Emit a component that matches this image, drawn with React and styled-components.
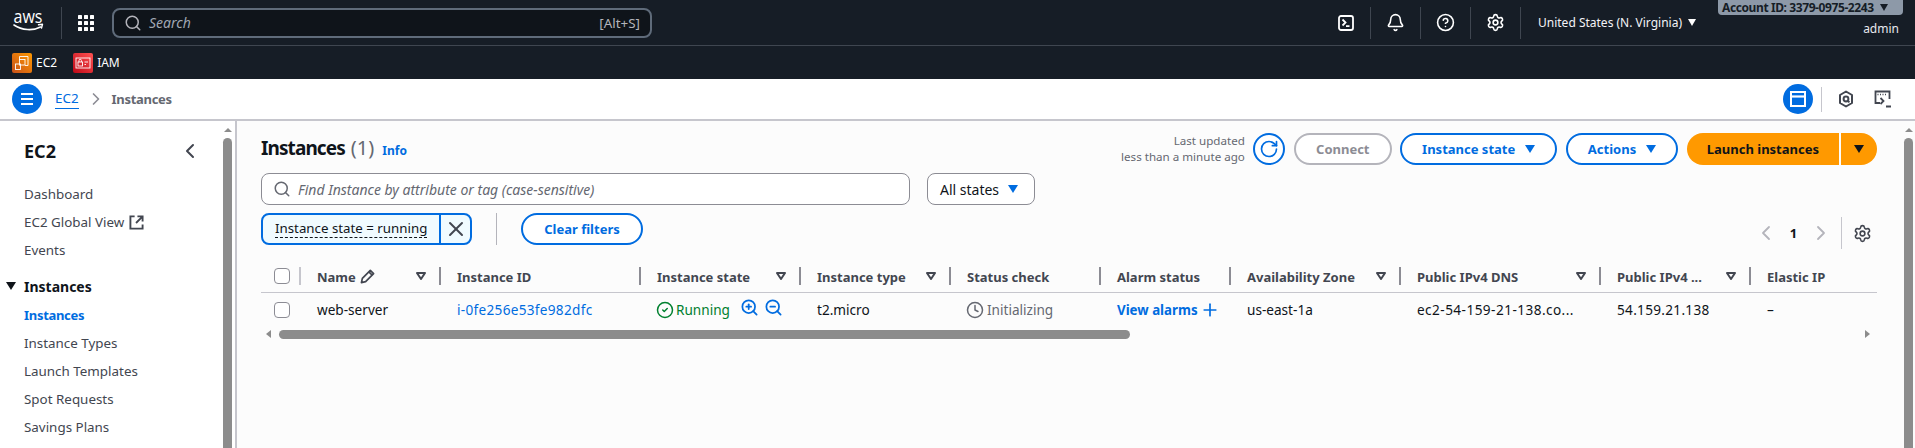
import React from 'react'
import styled, { createGlobalStyle } from 'styled-components'
import { Bell, ChevronLeft, ChevronRight, CircleCheck, CircleHelp, Clock, Plus, RotateCw, Search, Settings, X, ZoomIn, ZoomOut } from 'lucide-react'

const GlobalStyle = createGlobalStyle`
  html, body { margin: 0; padding: 0; height: 448px; overflow: hidden; background: #fff; }
  body { font-family: "Noto Sans", "Open Sans", sans-serif; font-size: 14px; color: #0f141a; }
  * { box-sizing: border-box; }
`

const Page = styled.div`
  width: 1915px;
  height: 448px;
  display: flex;
  flex-direction: column;
  overflow: hidden;
`

/* top dark nav */
const TopNav = styled.header`
  height: 46px;
  flex: none;
  display: flex;
  align-items: center;
  padding-right: 12px;
  background: #161d26;
  border-bottom: 1px solid #3f4650;
  color: #fff;
`
const LogoBox = styled.div`
  width: 61px;
  padding-left: 13px;
  display: flex;
`
const NavSep = styled.div`
  width: 1px;
  height: 32px;
  background: #3f4650;
  flex: none;
`
const GridBtn = styled.div`
  width: 50px;
  padding-left: 16px;
  display: flex;
`
const SearchBox = styled.div`
  width: 540px;
  height: 30px;
  display: flex;
  align-items: center;
  padding: 0 10px;
  background: #0f141a;
  border: 2px solid #5f6b7a;
  border-radius: 8px;
  color: #b4b4bb;
`
const SearchHint = styled.span`
  font-style: italic;
  font-size: 14px;
  margin-left: 7px;
  flex: 1;
  color: #a0a7b2;
`
const SearchKey = styled.span`
  font-size: 13.4px;
`
const NavSlot = styled.div`
  width: 49px;
  display: flex;
  justify-content: center;
`
const NavIcons = styled.div`
  margin-left: 669px;
  display: flex;
  align-items: center;
`
const Region = styled.div`
  display: flex;
  align-items: center;
  margin-left: 17px;
  font-size: 12px;
  color: #f3f3f7;
  gap: 6px;
`
const Account = styled.div`
  margin-left: auto;
  width: 185px;
  align-self: flex-start;
  display: flex;
  flex-direction: column;
  align-items: flex-end;
`
const AccountBadge = styled.div`
  width: 185px;
  height: 15px;
  background: #8d99a8;
  border-radius: 0 0 4px 4px;
  color: #161d26;
  font-size: 12px;
  font-weight: 700;
  letter-spacing: -0.4px;
  line-height: 15px;
  padding-left: 4px;
  white-space: nowrap;
  display: flex;
  align-items: center;
  gap: 6px;
`
const AdminName = styled.div`
  font-size: 12px;
  line-height: 16px;
  margin-top: 6px;
  padding-right: 4px;
  color: #e8e8ee;
`

/* favourites bar */
const ServiceBar = styled.div`
  height: 33px;
  flex: none;
  display: flex;
  align-items: center;
  padding-left: 12px;
  background: #161d26;
  font-size: 12px;
  color: #fff;
`
const Service = styled.div`
  display: flex;
  align-items: center;
  gap: 4px;
  margin-right: 16px;
`

/* breadcrumb */
const Crumbs = styled.div`
  height: 42px;
  flex: none;
  display: flex;
  align-items: center;
  padding-left: 12px;
  background: #fff;
  border-bottom: 2px solid #c6c6cd;
`
const RoundBtn = styled.div`
  width: 30px;
  height: 30px;
  border-radius: 50%;
  background: #006ce0;
  display: flex;
  align-items: center;
  justify-content: center;
  flex: none;
`
const CrumbLink = styled.a`
  margin-left: 13px;
  font-size: 13.4px;
  line-height: 19px;
  color: #006ce0;
  border-bottom: 1px solid #006ce0;
`
const CrumbSep = styled.div`
  display: flex;
  margin: 0 6px 0 7px;
  color: #8c8c94;
`
const CrumbNow = styled.span`
  font-size: 13px;
  font-weight: 700;
  letter-spacing: -0.3px;
  color: #656871;
`
const CrumbTools = styled.div`
  margin-left: auto;
  padding-right: 23px;
  display: flex;
  align-items: center;
`
const ToolSep = styled.div`
  width: 1px;
  height: 25px;
  margin: 0 16px 0 8px;
  background: #c6c6cd;
`
const ToolGap = styled.div`
  width: 20px;
`

/* body */
const Body = styled.div`
  flex: 1;
  min-height: 0;
  display: flex;
`
const Side = styled.aside`
  width: 237px;
  flex: none;
  display: flex;
  background: #fff;
  border-right: 2px solid #c6c6cd;
`
const SideInner = styled.div`
  flex: 1;
  min-width: 0;
`
const SideHead = styled.div`
  height: 59px;
  padding: 16px 21px 15px 24px;
  display: flex;
  align-items: center;
  justify-content: space-between;
  font-size: 18px;
  font-weight: 700;
  line-height: 28px;
  color: #0f141a;
`
const SideItem = styled.div`
  height: 28px;
  padding-left: 24px;
  display: flex;
  align-items: center;
  gap: 5px;
  font-size: ${p => (p.$active ? 13 : 13.4)}px;
  font-weight: ${p => (p.$active ? 700 : 400)};
  letter-spacing: ${p => (p.$active ? '-0.3px' : '0')};
  color: ${p => (p.$active ? '#006ce0' : '#424650')};
`
const SideSection = styled.div`
  height: 28px;
  margin: 8px 0 1px;
  padding-left: 6px;
  display: flex;
  align-items: center;
  gap: 8px;
  font-size: 14px;
  font-weight: 700;
  color: #0f141a;
`
const VScroll = styled.div`
  width: 9px;
  flex: none;
  margin-left: ${p => p.$ml || 0}px;
  margin-right: ${p => p.$mr}px;
  display: flex;
  flex-direction: column;
  align-items: center;
  padding-top: 7px;
  gap: 6px;
`
const VThumb = styled.div`
  flex: 1;
  width: 9px;
  background: #8c8c8c;
  border-radius: 5px 5px 0 0;
`
const Main = styled.main`
  flex: 1;
  min-width: 0;
  display: flex;
  background: #fcfcfc;
`
const Panel = styled.div`
  width: 1616px;
  margin-left: 24px;
  padding-top: 12px;
  flex: none;
`
const TitleRow = styled.div`
  height: 32px;
  display: flex;
  align-items: center;
  justify-content: space-between;
`
const Title = styled.h1`
  margin: 0;
  padding-top: 1px;
  display: flex;
  align-items: baseline;
  font-size: 19px;
  font-weight: 700;
  line-height: 32px;
  letter-spacing: -0.9px;
`
const Count = styled.span`
  font-size: 20px;
  font-weight: 400;
  letter-spacing: 0;
  color: #656871;
  margin-left: 6px;
`
const InfoLink = styled.a`
  margin-left: 8px;
  font-size: 12px;
  font-weight: 700;
  letter-spacing: 0;
  color: #006ce0;
`
const Actions = styled.div`
  display: flex;
  align-items: center;
  gap: 8.6px;
`
const Updated = styled.div`
  text-align: right;
  font-size: 11.6px;
  line-height: 16px;
  color: #656871;
`
const RefreshBtn = styled.div`
  width: 32px;
  height: 32px;
  border: 2px solid #006ce0;
  border-radius: 50%;
  display: flex;
  align-items: center;
  justify-content: center;
  color: #006ce0;
  background: #fff;
`
const Pill = styled.div`
  height: 32px;
  padding: 0 20px;
  display: flex;
  align-items: center;
  gap: 10px;
  border: 2px solid ${p => (p.$off ? '#b4b4bb' : '#006ce0')};
  border-radius: 20px;
  background: #fff;
  font-size: 13px;
  font-weight: 700;
  white-space: nowrap;
  color: ${p => (p.$off ? '#8c8c94' : '#006ce0')};
`
const Split = styled.div`
  display: flex;
  gap: 2px;
`
const LaunchBtn = styled.div`
  height: 32px;
  padding: 0 ${p => (p.$caret ? 13 : 20)}px;
  display: flex;
  align-items: center;
  background: #ff9900;
  border-radius: ${p => (p.$caret ? '0 20px 20px 0' : '20px 0 0 20px')};
  font-size: 13px;
  font-weight: 700;
  white-space: nowrap;
  color: #0f141a;
`
const FindRow = styled.div`
  margin-top: 8px;
  display: flex;
  gap: 17px;
`
const FindBox = styled.div`
  width: 649px;
  height: 32px;
  display: flex;
  align-items: center;
  gap: 7px;
  padding-left: 11px;
  background: #fff;
  border: 1px solid #8c8c94;
  border-radius: 8px;
  color: #656871;
`
const FindHint = styled.span`
  font-style: italic;
  font-size: 14px;
  color: #656871;
`
const SelectBox = styled.div`
  width: 108px;
  height: 32px;
  display: flex;
  align-items: center;
  justify-content: space-between;
  padding: 0 16px 0 12px;
  background: #fff;
  border: 1px solid #8c8c94;
  border-radius: 8px;
  font-size: 14px;
  color: #0f141a;
`
const TokenRow = styled.div`
  margin-top: 8px;
  height: 32px;
  display: flex;
  align-items: center;
`
const Token = styled.div`
  width: 211px;
  height: 32px;
  display: flex;
  border: 2px solid #006ce0;
  border-radius: 8px;
  background: #f0fbff;
`
const TokenText = styled.div`
  flex: 1;
  padding-left: 12px;
  border-right: 2px solid #006ce0;
  display: flex;
  align-items: center;
`
const TokenLabel = styled.span`
  font-size: 13.3px;
  line-height: 17px;
  white-space: nowrap;
  color: #0f141a;
  border-bottom: 1px dashed #0f141a;
`
const TokenClose = styled.div`
  width: 29px;
  display: flex;
  align-items: center;
  justify-content: center;
  color: #424650;
`
const VDivider = styled.div`
  width: 1px;
  height: 32px;
  margin: 0 24px;
  background: #b4b4bb;
`
const ClearBtn = styled(Pill)`
  width: 122px;
  justify-content: center;
  padding: 0;
`
const Pager = styled.div`
  margin-left: auto;
  margin-top: 4px;
  padding-right: 5px;
  height: 32px;
  align-self: flex-start;
  display: flex;
  align-items: center;
`
const PageNo = styled.span`
  width: 31px;
  text-align: center;
  font-size: 13px;
  font-weight: 700;
`
const PagerSep = styled.div`
  width: 1px;
  height: 32px;
  margin: 0 11px 0 8px;
  background: #c6c6cd;
`
const Table = styled.div`
  margin-top: 15px;
  overflow: hidden;
`
const HeadRow = styled.div`
  height: 33px;
  display: flex;
  align-items: center;
  border-bottom: 1px solid #c6c6cd;
`
const DataRow = styled.div`
  height: 34px;
  padding-bottom: 1px;
  display: flex;
  align-items: center;
`
const HeadCell = styled.div`
  width: ${p => p.$w}px;
  flex: none;
  height: 18px;
  display: flex;
  align-items: center;
  padding-left: 16px;
  font-size: 13px;
  font-weight: 700;
  color: #424650;
  white-space: nowrap;
`
const HeadLabel = styled.div`
  flex: 1;
  padding-top: 1px;
  display: flex;
  align-items: center;
  gap: 4px;
`
const HeadSep = styled.div`
  width: 2px;
  height: 18px;
  flex: none;
  background: ${p => (p.$light ? '#c6c6cd' : '#8c8c94')};
`
const FilterWrap = styled.div`
  display: flex;
  margin-right: 13px;
`
const CheckCell = styled.div`
  width: 40px;
  flex: none;
  padding-left: 13px;
  display: flex;
  align-items: center;
  justify-content: space-between;
`
const Check = styled.div`
  width: 16px;
  height: 16px;
  background: #fff;
  border: 1px solid #8c8c94;
  border-radius: 4px;
`
const Cell = styled.div`
  width: ${p => p.$w}px;
  flex: none;
  padding-left: 16px;
  display: flex;
  align-items: center;
  gap: ${p => p.$gap || 2}px;
  font-size: ${p => (p.$bold ? 13.3 : 13.6)}px;
  font-weight: ${p => (p.$bold ? 700 : 400)};
  letter-spacing: ${p => p.$track || 0}px;
  white-space: nowrap;
  color: ${p => p.$color || '#0f141a'};
`
const StatusIcon = styled.span`
  display: flex;
  margin-left: -1px;
`
const ZoomLink = styled.div`
  display: flex;
  margin: -4px 0 0 ${p => p.$ml}px;
  color: #006ce0;
`
const HScroll = styled.div`
  height: 14px;
  display: flex;
  align-items: center;
  padding: 0 7px 0 5px;
`
const HThumb = styled.div`
  width: 851px;
  height: 9px;
  margin-left: 8px;
  border-radius: 5px;
  background: #8c8c8c;
`
const HEnd = styled.div`
  margin-left: auto;
  display: flex;
`

const Tri = ({ w = 10, h = 8, color = 'currentColor', dir = 'down' }) => {
  const pts = { down: '0,0 10,0 5,8', up: '0,8 10,8 5,0', left: '10,0 10,8 0,4', right: '0,0 0,8 10,4' }[dir]
  return (
    <svg width={w} height={h} viewBox="0 0 10 8" preserveAspectRatio="none">
      <polygon points={pts} fill={color} />
    </svg>
  )
}

const FilterCaret = () => (
  <FilterWrap>
    <svg width="10" height="8" viewBox="0 0 10 8">
      <polygon points="1,1 9,1 5,7" fill="none" stroke="#424650" strokeWidth="2" strokeLinejoin="round" />
    </svg>
  </FilterWrap>
)

const AwsLogo = () => (
  <svg width="32" height="40" viewBox="0 0 32 40">
    <text x="0.5" y="19.5" fontFamily="Open Sans, Noto Sans, sans-serif" fontSize="18" fill="#fff" textLength="29" lengthAdjust="spacingAndGlyphs">aws</text>
    <path d="M1 22c8 5.5 19 6 26.5 2" fill="none" stroke="#fff" strokeWidth="1.6" strokeLinecap="round" />
    <path d="M25.5 21.8l4-.5-1 3.8" fill="none" stroke="#fff" strokeWidth="1.4" strokeLinecap="round" strokeLinejoin="round" />
  </svg>
)

const GridIcon = () => (
  <svg width="16" height="16" viewBox="0 0 16 16" fill="#fff">
    {[0, 6, 12].map(y => [0, 6, 12].map(x => <rect key={`${x}-${y}`} x={x} y={y} width="4" height="4" rx="0.6" />))}
  </svg>
)

const TerminalIcon = () => (
  <svg width="16" height="16" viewBox="0 0 16 16" fill="none" stroke="#fff" strokeWidth="1.8">
    <rect x="1" y="1" width="14" height="14" rx="2" />
    <path d="M4.5 4.5l3 3-3 3M8 11.2h3.5" />
  </svg>
)

const Ec2Icon = () => (
  <svg width="20" height="20" viewBox="0 0 20 20">
    <defs>
      <linearGradient id="ec2g" x1="0" y1="1" x2="1" y2="0">
        <stop offset="0" stopColor="#c8511b" />
        <stop offset="1" stopColor="#ff9900" />
      </linearGradient>
    </defs>
    <rect width="20" height="20" rx="2" fill="url(#ec2g)" />
    <g fill="none" stroke="#fff" strokeWidth="0.9">
      <path d="M7.5 6V3.5h8.5v9h-3" />
      <rect x="7.5" y="6.5" width="5.5" height="5.5" />
      <rect x="3.5" y="11" width="5" height="5.5" />
    </g>
  </svg>
)

const IamIcon = () => (
  <svg width="20" height="20" viewBox="0 0 20 20">
    <defs>
      <linearGradient id="iamg" x1="0" y1="1" x2="1" y2="0">
        <stop offset="0" stopColor="#bd0816" />
        <stop offset="1" stopColor="#ff5252" />
      </linearGradient>
    </defs>
    <rect width="20" height="20" rx="2" fill="url(#iamg)" />
    <g fill="none" stroke="#fff" strokeWidth="0.9">
      <rect x="3" y="5" width="14" height="10" />
      <rect x="5" y="9" width="4.5" height="4" />
      <path d="M6 9V7.5a1.2 1.2 0 0 1 2.4 0V9M11.5 9h3.5M11.5 11.5h1.5" />
    </g>
  </svg>
)

const MenuIcon = () => (
  <svg width="16" height="16" viewBox="0 0 16 16" fill="none" stroke="#fff" strokeWidth="2">
    <path d="M2 3h12M2 8h12M2 13h12" />
  </svg>
)

const PanelIcon = () => (
  <svg width="16" height="16" viewBox="0 0 16 16" fill="none" stroke="#fff">
    <rect x="1" y="1" width="14" height="14" strokeWidth="2" />
    <path d="M2 5.5h12" strokeWidth="2.2" />
  </svg>
)

const HexIcon = () => (
  <svg width="16" height="18" viewBox="0 0 16 18" fill="none" stroke="#424650" strokeWidth="2">
    <path d="M8 1.5l6 3.5v8l-6 3.5L2 13V5z" strokeLinejoin="round" />
    <circle cx="8" cy="9" r="2.4" />
    <path d="M10 11l1.4 1.4" />
  </svg>
)

const ConsoleIcon = () => (
  <svg width="18" height="18" viewBox="0 0 18 18" fill="none" stroke="#424650" strokeWidth="1.8">
    <path d="M6 13H1.5V1.5h14V9" />
    <path d="M3.5 4.5h1M6 4.5h1M8.5 4.5h1M11 4.5h1" strokeWidth="1.4" />
    <path d="M6.5 8l3 3-3 3M12 16.5h5" />
  </svg>
)

const OutLink = () => (
  <svg width="15" height="15" viewBox="0 0 16 16" fill="none" stroke="#424650" strokeWidth="2">
    <path d="M6 1.5H1.5v13h13V10" />
    <path d="M9 1.5h5.5V7M14 2L7.5 8.5" />
  </svg>
)

const Pencil = () => (
  <svg width="15" height="15" viewBox="0 0 16 16" fill="none" stroke="#424650" strokeWidth="1.8" strokeLinejoin="round">
    <path d="M1.5 14.5l1-4.5L11 1.5l3.5 3.5L6 13.5z" />
    <path d="M9.5 3l3.5 3.5" />
  </svg>
)

const columns = [
  { key: 'name', w: 140, label: 'Name', edit: true, filter: true },
  { key: 'id', w: 200, label: 'Instance ID' },
  { key: 'state', w: 160, label: 'Instance state', filter: true },
  { key: 'type', w: 150, label: 'Instance type', filter: true },
  { key: 'status', w: 150, label: 'Status check' },
  { key: 'alarm', w: 130, label: 'Alarm status' },
  { key: 'az', w: 170, label: 'Availability Zone', filter: true },
  { key: 'dns', w: 200, label: 'Public IPv4 DNS', filter: true },
  { key: 'ip', w: 150, label: 'Public IPv4 ...', filter: true },
  { key: 'eip', w: 126, label: 'Elastic IP', last: true },
]

const navItems = ['Instance Types', 'Launch Templates', 'Spot Requests', 'Savings Plans']

export default function App() {
  return (
    <Page>
      <GlobalStyle />
      <TopNav>
        <LogoBox><AwsLogo /></LogoBox>
        <NavSep />
        <GridBtn><GridIcon /></GridBtn>
        <SearchBox>
          <Search size={18} strokeWidth={2} />
          <SearchHint>Search</SearchHint>
          <SearchKey>[Alt+S]</SearchKey>
        </SearchBox>
        <NavIcons>
          <NavSlot><TerminalIcon /></NavSlot>
          <NavSep />
          <NavSlot><Bell size={19} strokeWidth={2} /></NavSlot>
          <NavSep />
          <NavSlot><CircleHelp size={19} strokeWidth={2} /></NavSlot>
          <NavSep />
          <NavSlot><Settings size={19} strokeWidth={2} /></NavSlot>
          <NavSep />
        </NavIcons>
        <Region>United States (N. Virginia) <Tri w={8} h={7} color="#fff" /></Region>
        <Account>
          <AccountBadge>Account ID: 3379-0975-2243 <Tri w={8} h={7} color="#161d26" /></AccountBadge>
          <AdminName>admin</AdminName>
        </Account>
      </TopNav>

      <ServiceBar>
        <Service><Ec2Icon />EC2</Service>
        <Service><IamIcon />IAM</Service>
      </ServiceBar>

      <Crumbs>
        <RoundBtn><MenuIcon /></RoundBtn>
        <CrumbLink>EC2</CrumbLink>
        <CrumbSep><ChevronRight size={20} strokeWidth={2} /></CrumbSep>
        <CrumbNow>Instances</CrumbNow>
        <CrumbTools>
          <RoundBtn><PanelIcon /></RoundBtn>
          <ToolSep />
          <HexIcon />
          <ToolGap />
          <ConsoleIcon />
        </CrumbTools>
      </Crumbs>

      <Body>
        <Side>
          <SideInner>
            <SideHead>EC2 <ChevronLeft size={24} strokeWidth={2} color="#424650" /></SideHead>
            <SideItem>Dashboard</SideItem>
            <SideItem>EC2 Global View <OutLink /></SideItem>
            <SideItem>Events</SideItem>
            <SideSection><Tri w={10} h={8} color="#0f141a" />Instances</SideSection>
            <SideItem $active>Instances</SideItem>
            {navItems.map(n => <SideItem key={n}>{n}</SideItem>)}
          </SideInner>
          <VScroll $mr={3}><Tri w={8} h={4} color="#8c8c8c" dir="up" /><VThumb /></VScroll>
        </Side>

        <Main>
          <Panel>
            <TitleRow>
              <Title>Instances <Count>(1)</Count><InfoLink>Info</InfoLink></Title>
              <Actions>
                <Updated>Last updated<br />less than a minute ago</Updated>
                <RefreshBtn><RotateCw size={20} strokeWidth={2} /></RefreshBtn>
                <Pill $off>Connect</Pill>
                <Pill>Instance state <Tri w={10} h={8} color="#006ce0" /></Pill>
                <Pill>Actions <Tri w={10} h={8} color="#006ce0" /></Pill>
                <Split>
                  <LaunchBtn>Launch instances</LaunchBtn>
                  <LaunchBtn $caret><Tri w={10} h={8} color="#0f141a" /></LaunchBtn>
                </Split>
              </Actions>
            </TitleRow>

            <FindRow>
              <FindBox>
                <Search size={18} strokeWidth={2} />
                <FindHint>Find Instance by attribute or tag (case-sensitive)</FindHint>
              </FindBox>
              <SelectBox>All states <Tri w={10} h={8} color="#006ce0" /></SelectBox>
            </FindRow>

            <TokenRow>
              <Token>
                <TokenText><TokenLabel>Instance state = running</TokenLabel></TokenText>
                <TokenClose><X size={24} strokeWidth={2} /></TokenClose>
              </Token>
              <VDivider />
              <ClearBtn>Clear filters</ClearBtn>
              <Pager>
                <ChevronLeft size={24} strokeWidth={1.8} color="#b4b4bb" />
                <PageNo>1</PageNo>
                <ChevronRight size={24} strokeWidth={1.8} color="#b4b4bb" />
                <PagerSep />
                <Settings size={19} strokeWidth={2} color="#424650" />
              </Pager>
            </TokenRow>

            <Table>
              <HeadRow>
                <CheckCell><Check /><HeadSep $light /></CheckCell>
                {columns.map(c => (
                  <HeadCell key={c.key} $w={c.w}>
                    <HeadLabel>{c.label}{c.edit && <Pencil />}</HeadLabel>
                    {c.filter && <FilterCaret />}
                    {!c.last && <HeadSep />}
                  </HeadCell>
                ))}
              </HeadRow>
              <DataRow>
                <CheckCell><Check /></CheckCell>
                <Cell $w={140}>web-server</Cell>
                <Cell $w={200} $color="#006ce0" $track={0.3}>i-0fe256e53fe982dfc</Cell>
                <Cell $w={160} $color="#00802f">
                  <StatusIcon><CircleCheck size={18} strokeWidth={2} /></StatusIcon>Running
                  <ZoomLink $ml={8}><ZoomIn size={19} strokeWidth={2.2} /></ZoomLink>
                  <ZoomLink $ml={3}><ZoomOut size={19} strokeWidth={2.2} /></ZoomLink>
                </Cell>
                <Cell $w={150}>t2.micro</Cell>
                <Cell $w={150} $color="#656871" $gap={3}>
                  <StatusIcon><Clock size={18} strokeWidth={2} /></StatusIcon>Initializing
                </Cell>
                <Cell $w={130} $color="#006ce0" $bold>View alarms <Plus size={20} strokeWidth={2} /></Cell>
                <Cell $w={170}>us-east-1a</Cell>
                <Cell $w={200} $track={0.45}>ec2-54-159-21-138.co...</Cell>
                <Cell $w={150} $track={0.3}>54.159.21.138</Cell>
                <Cell $w={126}>–</Cell>
              </DataRow>
              <HScroll>
                <Tri w={5} h={8} color="#8c8c8c" dir="left" />
                <HThumb />
                <HEnd><Tri w={5} h={8} color="#8c8c8c" dir="right" /></HEnd>
              </HScroll>
            </Table>
          </Panel>
          <VScroll $ml={27} $mr={2}><Tri w={8} h={4} color="#8c8c8c" dir="up" /><VThumb /></VScroll>
        </Main>
      </Body>
    </Page>
  )
}
